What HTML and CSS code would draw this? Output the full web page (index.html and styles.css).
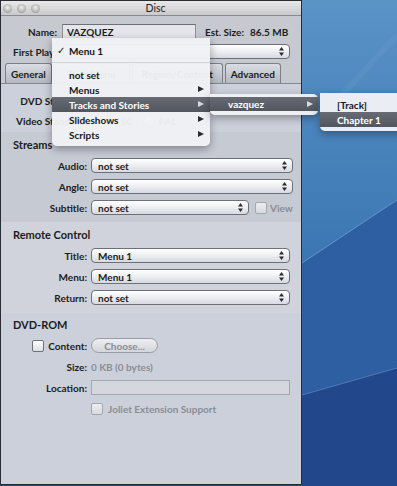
FILE: index.html
```html
<!DOCTYPE html>
<html lang="en">
<head>
    <meta charset="UTF-8">
    <title>Disc</title>
    <link rel="stylesheet" href="styles.css">
</head>
<body>
    <div class="screen">
        <div class="window">
            <div class="titlebar">
                <span class="lights"><i></i><i></i><i></i></span>
                <span class="title">Disc</span>
            </div>

            <div class="head">
                <div class="name-row">
                    <span class="lbl name-lbl">Name:</span>
                    <div class="field name-field">VAZQUEZ</div>
                    <span class="est">Est. Size:</span>
                    <span class="est-val">86.5 MB</span>
                </div>
                <div class="play-row">
                    <span class="lbl">First Play:</span>
                    <div class="popup">Menu 1<svg class="updown" width="5" height="9" viewBox="0 0 5 9"><path d="M0 3.5L2.5 0L5 3.5Z M0 5.5L2.5 9L5 5.5Z"/></svg></div>
                </div>
                <div class="tabs">
                    <div class="tab">General</div>
                    <div class="tab tab-menu">Disc Menu</div>
                    <div class="tab tab-region">Region/Content</div>
                    <div class="tab">Advanced</div>
                </div>
            </div>

            <div class="panel">
                <section class="group general">
                    <div class="form">
                        <span class="lbl">DVD Standard:</span>
                        <div class="radios"><span class="radio on"></span>SD DVD<span class="radio"></span>HD DVD</div>
                        <span class="lbl">Video Standard:</span>
                        <div class="radios"><span class="radio on"></span>NTSC<span class="radio"></span>PAL</div>
                    </div>
                </section>

                <section class="group streams">
                    <h2>Streams</h2>
                    <div class="form">
                        <span class="lbl">Audio:</span>
                        <div class="popup">not set<svg class="updown" width="5" height="9" viewBox="0 0 5 9"><path d="M0 3.5L2.5 0L5 3.5Z M0 5.5L2.5 9L5 5.5Z"/></svg></div>
                        <span class="lbl">Angle:</span>
                        <div class="popup">not set<svg class="updown" width="5" height="9" viewBox="0 0 5 9"><path d="M0 3.5L2.5 0L5 3.5Z M0 5.5L2.5 9L5 5.5Z"/></svg></div>
                        <span class="lbl">Subtitle:</span>
                        <div class="inline">
                            <div class="popup short">not set<svg class="updown" width="5" height="9" viewBox="0 0 5 9"><path d="M0 3.5L2.5 0L5 3.5Z M0 5.5L2.5 9L5 5.5Z"/></svg></div>
                            <span class="check off"></span>
                            <span class="dim">View</span>
                        </div>
                    </div>
                </section>

                <section class="group remote">
                    <h2>Remote Control</h2>
                    <div class="form">
                        <span class="lbl">Title:</span>
                        <div class="popup">Menu 1<svg class="updown" width="5" height="9" viewBox="0 0 5 9"><path d="M0 3.5L2.5 0L5 3.5Z M0 5.5L2.5 9L5 5.5Z"/></svg></div>
                        <span class="lbl">Menu:</span>
                        <div class="popup">Menu 1<svg class="updown" width="5" height="9" viewBox="0 0 5 9"><path d="M0 3.5L2.5 0L5 3.5Z M0 5.5L2.5 9L5 5.5Z"/></svg></div>
                        <span class="lbl">Return:</span>
                        <div class="popup">not set<svg class="updown" width="5" height="9" viewBox="0 0 5 9"><path d="M0 3.5L2.5 0L5 3.5Z M0 5.5L2.5 9L5 5.5Z"/></svg></div>
                    </div>
                </section>

                <section class="group rom">
                    <h2>DVD-ROM</h2>
                    <div class="form">
                        <span class="lbl"><span class="check"></span>Content:</span>
                        <div><span class="pill">Choose...</span></div>
                        <span class="lbl">Size:</span>
                        <span class="dim">0 KB (0 bytes)</span>
                        <span class="lbl">Location:</span>
                        <div class="field loc-field"></div>
                        <span></span>
                        <div class="inline"><span class="check off"></span><span class="dim">Joliet Extension Support</span></div>
                    </div>
                </section>
            </div>
        </div>

        <div class="desktop">
            <svg width="95" height="486" viewBox="0 0 95 486">
                <defs>
                    <linearGradient id="sky" x1="0" y1="0" x2="0" y2="1">
                        <stop offset="0" stop-color="#5a93c6"/>
                        <stop offset="1" stop-color="#3b76b3"/>
                    </linearGradient>
                </defs>
                <rect width="95" height="486" fill="#214586"/>
                <polygon points="0,0 95,0 95,200 0,263" fill="url(#sky)"/>
                <polygon points="0,263 95,200 95,368 0,395" fill="#2d5fa2"/>
                <polygon points="0,395 95,368 95,486 0,486" fill="#22478a"/>
                <line x1="0" y1="263" x2="95" y2="200" stroke="#7fa9d6" stroke-width="1" opacity="0.7"/>
                <line x1="0" y1="395" x2="95" y2="368" stroke="#6f97c8" stroke-width="1" opacity="0.6"/>
                <line x1="40" y1="95" x2="95" y2="35" stroke="#8cb3dc" stroke-width="6" opacity="0.12"/>
            </svg>
        </div>

        <div class="menu main-menu">
            <div class="item"><span class="tick">✓</span>Menu 1</div>
            <div class="sep"></div>
            <div class="item">not set</div>
            <div class="item sub">Menus</div>
            <div class="item sub hi">Tracks and Stories</div>
            <div class="item sub">Slideshows</div>
            <div class="item sub">Scripts</div>
        </div>

        <div class="menu sub-one">
            <div class="item sub hi">vazquez</div>
        </div>

        <div class="menu sub-two">
            <div class="item">[Track]</div>
            <div class="item hi">Chapter 1</div>
        </div>
    </div>
</body>
</html>
```

FILE: styles.css
```css
body {
    margin: 0;
    padding: 0;
    font-family: Lato, "DejaVu Sans", sans-serif;
    font-size: 10px;
    font-weight: 700;
    color: #1b1c20;
}
.screen {
    display: flex;
    width: 397px;
    height: 486px;
    position: relative;
    overflow: hidden;
    background-color: #22478a;
}
.window {
    width: 300px;
    height: 483px;
    border: 1px solid #2a2c33;
    background-color: #ccd0da;
    display: flex;
    flex-direction: column;
}
.desktop {
    flex: 1;
}
.desktop svg {
    display: block;
}

/* title bar */
.titlebar {
    height: 14px;
    border-bottom: 1px solid #8a8b90;
    background: linear-gradient(#e9e9ea, #c9c9cc);
    display: flex;
    align-items: center;
    position: relative;
}
.lights {
    display: flex;
    gap: 5px;
    margin-left: 2px;
}
.lights i {
    width: 9px;
    height: 9px;
    border-radius: 50%;
    background: radial-gradient(circle at 50% 40%, #eeeeee, #b4b4b6 60%, #7c7c80);
}
.title {
    flex: 1;
    text-align: center;
    margin-right: 30px;
    font-weight: 400;
    font-size: 10.5px;
    color: #222;
}

/* head */
.head {
    background-color: #c6c9d0;
    padding-top: 8px;
}
.name-row {
    display: flex;
    align-items: center;
    height: 15px;
}
.name-lbl {
    width: 56px;
    text-align: right;
    margin-right: 5px;
}
.field {
    height: 13px;
    border: 1px solid #8d9097;
    border-top-color: #6d7077;
    background-color: #e4e6eb;
    display: flex;
    align-items: center;
    padding-left: 4px;
    box-sizing: content-box;
}
.name-field {
    width: 128px;
}
.est {
    margin-left: 9px;
}
.est-val {
    margin-left: 6px;
}
.play-row {
    display: flex;
    align-items: center;
    gap: 6px;
    padding: 0 11px 0 12px;
    margin-top: 5px;
}
.play-row .popup {
    flex: 1;
}
.tabs {
    display: flex;
    gap: 2px;
    padding-left: 4px;
    margin-top: 4px;
    height: 21px;
    border-bottom: 1px solid #83878f;
    box-sizing: border-box;
}
.tab {
    height: 20px;
    border: 1px solid #7b7f87;
    border-bottom: none;
    border-radius: 3px 3px 0 0;
    background: linear-gradient(#dadde3, #b4b8c0);
    display: flex;
    align-items: center;
    justify-content: center;
    padding: 0 5px;
    box-sizing: border-box;
}
.tab-menu {
    width: 76px;
}
.tab-region {
    width: 91px;
}

/* panel */
.panel {
    flex: 1;
}
.group h2 {
    margin: 0 0 6px 12px;
    font-size: 11px;
    line-height: 14px;
}
.general {
    padding: 9px 0 4px;
}
.general .form {
    row-gap: 5px;
}
.streams {
    background-color: #c6cad3;
    padding: 6px 0 7px;
}
.remote {
    background-color: #d0d3db;
    padding: 6px 0 8px;
}
.rom {
    padding: 5px 0 0;
}
.form {
    display: grid;
    grid-template-columns: 86px 1fr;
    column-gap: 4px;
    row-gap: 6px;
    align-items: center;
    padding-right: 11px;
}
.form > * {
    height: 15px;
    display: flex;
    align-items: center;
}
.lbl {
    justify-content: flex-end;
    white-space: nowrap;
}
.inline {
    display: flex;
    align-items: center;
}

/* controls */
.popup {
    height: 13px;
    border: 1px solid #6c7078;
    border-radius: 4px;
    background: linear-gradient(#ffffff, #eceef2 50%, #d6d9df);
    display: flex;
    align-items: center;
    justify-content: space-between;
    padding: 0 5px 0 6px;
    box-sizing: content-box;
}
.popup.short {
    width: 145px;
}
.updown {
    fill: #2a2b30;
}
.check {
    width: 10px;
    height: 10px;
    border: 1px solid #6f7279;
    border-radius: 2px;
    background: linear-gradient(#ffffff, #dcdee3);
    margin-right: 4px;
}
.check.off {
    border-color: #a4a7ae;
    background: linear-gradient(#eceef1, #d6d9df);
}
.inline .check {
    margin-left: 6px;
    margin-right: 3px;
}
.rom .inline .check {
    margin-left: 0;
    margin-right: 5px;
}
.dim {
    color: #8a8d95;
}
.pill {
    width: 65px;
    height: 13px;
    border: 1px solid #999ca3;
    border-radius: 8px;
    background: linear-gradient(#eceef1, #d3d6dc);
    color: #8a8d95;
    display: flex;
    align-items: center;
    justify-content: center;
}
.loc-field {
    height: 13px;
    border-color: #a3a6ad;
    background-color: #d4d7de;
}
.radios {
    gap: 4px;
}
.radio {
    width: 10px;
    height: 10px;
    border-radius: 50%;
    border: 1px solid #777a81;
    background: linear-gradient(#ffffff, #d8dbe0);
    margin-left: 6px;
}
.radio.on {
    background: radial-gradient(circle, #333 2px, #e8eaee 3px);
    margin-left: 0;
}

/* popup menus */
.menu {
    position: absolute;
    background-color: rgba(240, 241, 245, 0.96);
    box-shadow: 0 3px 8px rgba(0, 0, 0, 0.35);
    border-radius: 0 0 5px 5px;
}
.item {
    height: 15px;
    display: flex;
    align-items: center;
    padding-left: 17px;
    position: relative;
    color: #16171b;
}
.item.sub::after {
    content: '';
    position: absolute;
    right: 6px;
    top: 4px;
    border-left: 6px solid #2b2c31;
    border-top: 3.5px solid transparent;
    border-bottom: 3.5px solid transparent;
}
.item.hi {
    background: linear-gradient(#676c74, #52575f);
    color: #ffffff;
}
.item.hi.sub::after {
    border-left-color: #d8dade;
}
.tick {
    position: absolute;
    left: 5px;
    font-family: "DejaVu Sans", sans-serif;
    font-size: 10px;
}
.sep {
    height: 9px;
    position: relative;
}
.sep::after {
    content: '';
    position: absolute;
    left: 0;
    right: 0;
    top: 4px;
    border-top: 1px solid #d2d4da;
}
.main-menu {
    left: 52px;
    top: 38px;
    width: 158px;
    padding: 5px 0 4px;
}
.sub-one {
    left: 210px;
    top: 94px;
    width: 108px;
    padding: 3px 0 4px;
    border-radius: 0 5px 5px 5px;
}
.sub-one .item {
    padding-left: 18px;
    height: 14px;
}
.sub-one .item.sub::after {
    top: 4px;
    right: 5px;
}
.sub-two {
    left: 320px;
    top: 93px;
    width: 85px;
    padding: 4px 0 4px;
    border-radius: 0 5px 5px 5px;
}
```
